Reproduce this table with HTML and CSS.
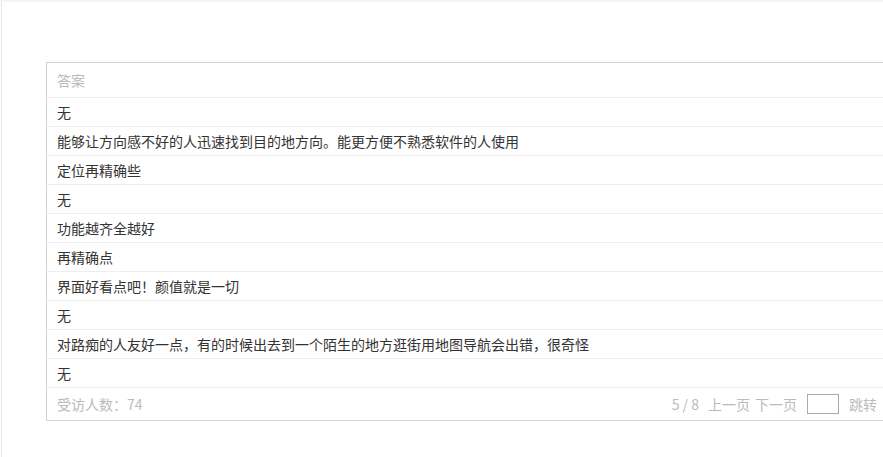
FILE: index.html
```html
<!DOCTYPE html>
<html lang="zh-CN">
<head>
    <meta charset="UTF-8">
    <meta name="viewport" content="width=device-width, initial-scale=1.0">
    <title>答案列表</title>
    <link rel="stylesheet" href="styles.css">
</head>
<body>
    <div class="page">
        <div class="panel">
            <div class="answers">
                <div class="answers-head">答案</div>
                <div class="answer">无</div>
                <div class="answer">能够让方向感不好的人迅速找到目的地方向。能更方便不熟悉软件的人使用</div>
                <div class="answer">定位再精确些</div>
                <div class="answer">无</div>
                <div class="answer">功能越齐全越好</div>
                <div class="answer">再精确点</div>
                <div class="answer">界面好看点吧！颜值就是一切</div>
                <div class="answer">无</div>
                <div class="answer">对路痴的人友好一点，有的时候出去到一个陌生的地方逛街用地图导航会出错，很奇怪</div>
                <div class="answer">无</div>
                <div class="answers-foot">
                    <span class="count">受访人数：74</span>
                    <div class="pager">
                        <span class="page-num">5 / 8</span>
                        <a>上一页</a>
                        <a>下一页</a>
                        <input class="jump-input" type="text">
                        <a>跳转</a>
                    </div>
                </div>
            </div>
        </div>
    </div>
</body>
</html>
```

FILE: styles.css
```css
html, body {
    margin: 0;
    background-color: white;
    overflow: hidden;
}
body {
    font-family: "Noto Sans CJK SC", "Microsoft YaHei", sans-serif;
    font-size: 14px;
    color: #333;
    height: 457px;
}
.page {
    height: 100%;
    border-top: 2px solid #f4f4f4;
    box-sizing: border-box;
}
.panel {
    height: 100%;
    margin-left: 1px;
    border-left: 1px solid #e6e6e6;
    padding: 60px 0 0 44px;
    box-sizing: border-box;
}
.answers {
    width: 840px;
    border: 1px solid #d2d2d2;
}
.answers-head {
    height: 34px;
    line-height: 34px;
    padding: 0 10px;
    color: #bbb;
    border-bottom: 1px solid #eee;
}
.answer {
    height: 28px;
    line-height: 28px;
    padding: 0 10px;
    border-bottom: 1px solid #eee;
    white-space: nowrap;
}
.answers-foot {
    height: 32px;
    display: flex;
    align-items: center;
    justify-content: space-between;
    padding: 0 10px;
    color: #bbb;
}
.pager {
    display: flex;
    align-items: center;
    gap: 5px;
}
.page-num {
    margin-right: 4px;
}
.jump-input {
    width: 32px;
    height: 20px;
    box-sizing: border-box;
    border: 1px solid #aaa;
    padding: 0;
    margin: 0 5px;
}
```
